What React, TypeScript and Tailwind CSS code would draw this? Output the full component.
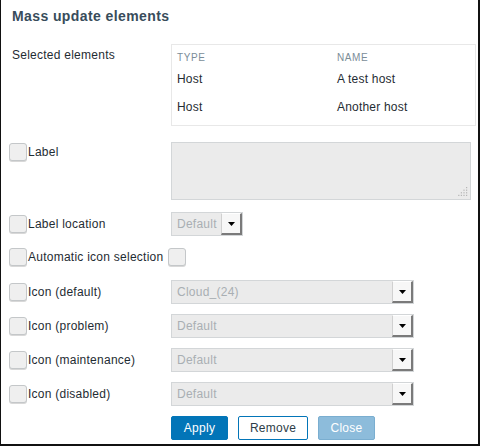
import React from "react";

function Check({ className = "" }: { className?: string }) {
  return (
    <span
      className={`block h-[18px] w-[18px] shrink-0 rounded-[3px] border border-[#c4c7c9] bg-[#efefef] shadow-[0_1px_0_#d8d8d8] ${className}`}
    />
  );
}

function Select({ value, width }: { value: string; width: string }) {
  return (
    <div className={`flex h-[24px] ${width} border border-[#d3d6d8] bg-[#ebebeb]`}>
      <span className="flex-1 pl-[5px] text-[12px] leading-[22px] tracking-[0.25px] text-[#a9afb3]">{value}</span>
      <span className="flex w-[21px] items-center justify-center border-t border-l border-t-white border-l-[#d0d0d0] border-r-2 border-b-2 border-r-[#7a7a7a] border-b-[#7a7a7a] bg-[#f7f7f7]">
        <svg width="7" height="4" viewBox="0 0 7 4">
          <path d="M0 0h7L3.5 4z" fill="#000" />
        </svg>
      </span>
    </div>
  );
}

function Row({ label, children, top }: { label: string; children: React.ReactNode; top: string }) {
  return (
    <div className={`grid grid-cols-[162px_1fr] items-center ${top}`}>
      <div className="flex items-center gap-[1px]">
        <Check />
        <span className="text-[12px] tracking-[0.25px] text-[#1f2c33]">{label}</span>
      </div>
      {children}
    </div>
  );
}

export default function App() {
  return (
    <div className="h-[446px] w-[480px] border-l border-r-2 border-b-2 border-[#111] bg-white font-['Liberation_Sans',Arial,sans-serif]">
      <h1 className="pt-2 pl-[11px] text-[14px] font-bold leading-4 tracking-[0.4px] text-[#384c5b]">Mass update elements</h1>

      <div className="mt-5 grid grid-cols-[170px_305px]">
        <div className="pt-[3px] pl-[11px] text-[12px] leading-4 tracking-[0.25px] text-[#1f2c33]">Selected elements</div>
        <div className="border border-[#e8e8e8] px-[5px] pt-[6px] pb-[4px] text-[12px] tracking-[0.2px] text-[#1f2c33]">
          <div className="grid grid-cols-[160px_1fr] text-[10px] leading-[14px] tracking-[0.6px] text-[#7b8d98]">
            <span>TYPE</span>
            <span>NAME</span>
          </div>
          <div className="grid h-[28px] grid-cols-[160px_1fr] items-center">
            <span>Host</span>
            <span>A test host</span>
          </div>
          <div className="grid h-[28px] grid-cols-[160px_1fr] items-center">
            <span>Host</span>
            <span>Another host</span>
          </div>
        </div>
      </div>

      <div className="px-2">
        <div className="mt-4 grid grid-cols-[162px_1fr] items-start">
          <div className="mt-[1px] flex items-center gap-[1px]">
            <Check />
            <span className="text-[12px] tracking-[0.25px] text-[#1f2c33]">Label</span>
          </div>
          <div className="relative h-[58px] w-[300px] border border-[#d3d6d8] bg-[#ebebeb]">
            <svg className="absolute right-[2px] bottom-[2px]" width="11" height="11" viewBox="0 0 11 11">
              {[
                [9, 1], [9, 3.6], [6.4, 3.6], [9, 6.2], [6.4, 6.2], [3.8, 6.2], [9, 8.8], [6.4, 8.8], [3.8, 8.8], [1.2, 8.8],
              ].map(([x, y], i) => (
                <rect key={i} x={x} y={y} width="1.2" height="1.2" fill="#b5b5b5" />
              ))}
            </svg>
          </div>
        </div>

        <Row label="Label location" top="mt-3">
          <Select value="Default" width="w-[72px]" />
        </Row>

        <div className="mt-3 grid grid-cols-[162px_1fr] items-center">
          <div className="flex items-center gap-[1px]">
            <Check />
            <span className="text-[12px] tracking-[0.25px] text-[#1f2c33]">Automatic icon selection</span>
          </div>
          <Check className="-ml-[3px]" />
        </div>

        <Row label="Icon (default)" top="mt-[14px]">
          <Select value="Cloud_(24)" width="w-[243px]" />
        </Row>
        <Row label="Icon (problem)" top="mt-[10px]">
          <Select value="Default" width="w-[243px]" />
        </Row>
        <Row label="Icon (maintenance)" top="mt-[10px]">
          <Select value="Default" width="w-[243px]" />
        </Row>
        <Row label="Icon (disabled)" top="mt-[10px]">
          <Select value="Default" width="w-[243px]" />
        </Row>

        <div className="mt-[10px] flex gap-[10px] pl-[162px] text-[12px] tracking-[0.25px]">
          <button className="h-[24px] w-[57px] rounded-[2px] border border-[#0275b8] bg-[#0275b8] text-white">Apply</button>
          <button className="h-[24px] w-[70px] rounded-[2px] border border-[#0275b8] bg-white text-[#2d3d48]">Remove</button>
          <button className="h-[24px] w-[57px] rounded-[2px] border border-[#7aaed0] bg-[#8dbcdb] text-white">Close</button>
        </div>
      </div>
    </div>
  );
}
